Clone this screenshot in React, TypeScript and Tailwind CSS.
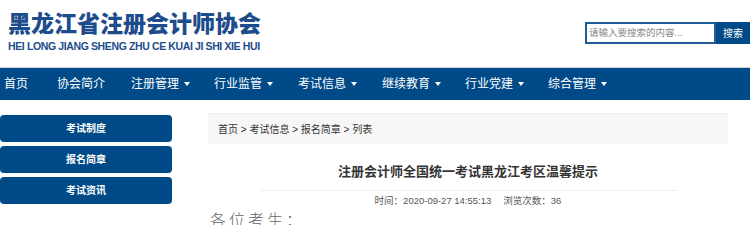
const navItems = [
  { label: '首页', drop: false, w: 'w-[57px] pl-[4px]' },
  { label: '协会简介', drop: false, w: 'w-[74px]' },
  { label: '注册管理', drop: true, w: 'w-[83px]' },
  { label: '行业监管', drop: true, w: 'w-[84px]' },
  { label: '考试信息', drop: true, w: 'w-[84px]' },
  { label: '继续教育', drop: true, w: 'w-[83px]' },
  { label: '行业党建', drop: true, w: 'w-[83px]' },
  { label: '综合管理', drop: true, w: 'w-[83px]' },
]

const sideItems = ['考试制度', '报名简章', '考试资讯']

export default function App() {
  return (
    <div
      className="w-[750px] h-[225px] overflow-hidden bg-white text-[#333]"
      style={{ fontFamily: '"Liberation Sans", "Noto Sans CJK SC", sans-serif' }}
    >
      {/* header */}
      <div className="h-[67px] flex justify-between">
        <div className="pl-[8px] pt-[11px]">
          <div className="text-[23px] leading-[26px] font-black text-[#1d4c8c]">
            黑龙江省注册会计师协会
          </div>
          <div className="mt-[3px] text-[10.5px] leading-[12px] font-bold text-[#1d4c8c] tracking-[-0.38px]">
            HEI LONG JIANG SHENG ZHU CE KUAI JI SHI XIE HUI
          </div>
        </div>
        <div className="pt-[22px] flex">
          <div className="w-[131px] h-[22px] border-2 border-[#1f5c99] bg-white flex items-center pl-[2px] text-[9.5px] text-[#888]">
            请输入要搜索的内容...
          </div>
          <div className="w-[34px] h-[22px] bg-[#004a87] text-white text-[10px] flex items-center justify-center">
            搜索
          </div>
        </div>
      </div>

      {/* nav */}
      <div className="h-[33px] bg-[#004a87] border-t border-[#c9d6e3] flex items-center">
        {navItems.map(item => (
          <div key={item.label} className={`text-white text-[12px] flex items-center ${item.w}`}>
            {item.label}
            {item.drop && (
              <span className="ml-[5px] inline-block w-0 h-0 border-l-[3px] border-r-[3px] border-t-[4px] border-l-transparent border-r-transparent border-t-white" />
            )}
          </div>
        ))}
      </div>

      {/* body */}
      <div className="flex pt-[13px]">
        <div className="w-[172px] flex flex-col gap-[4px] pt-[2px]">
          {sideItems.map(s => (
            <div
              key={s}
              className="h-[27px] bg-[#004a87] rounded-[4px] text-white text-[10px] font-bold flex items-center justify-center"
            >
              {s}
            </div>
          ))}
        </div>
        <div className="ml-[36px] w-[520px]">
          <div className="h-[31px] bg-[#f7f7f7] border-t-2 border-[#efefef] flex items-center pl-[10px] text-[10px] text-[#333]">
            首页 &gt; 考试信息 &gt; 报名简章 &gt; 列表
          </div>
          <div className="pt-[18px] text-center text-[13px] font-bold text-[#333] leading-[20px]">
            注册会计师全国统一考试黑龙江考区温馨提示
          </div>
          <div className="mx-auto mt-[8px] w-[417px] border-t border-[#eeeeee]" />
          <div className="mt-[2px] text-center text-[9.5px] text-[#555] leading-[16px]">
            时间：2020-09-27 14:55:13<span className="inline-block w-[12px]" />浏览次数：36
          </div>
          <div className="mt-[2px] pl-[2px] text-[16px] text-[#666] font-light tracking-[3px] leading-[20px]">
            各位考生：
          </div>
        </div>
      </div>
    </div>
  )
}
